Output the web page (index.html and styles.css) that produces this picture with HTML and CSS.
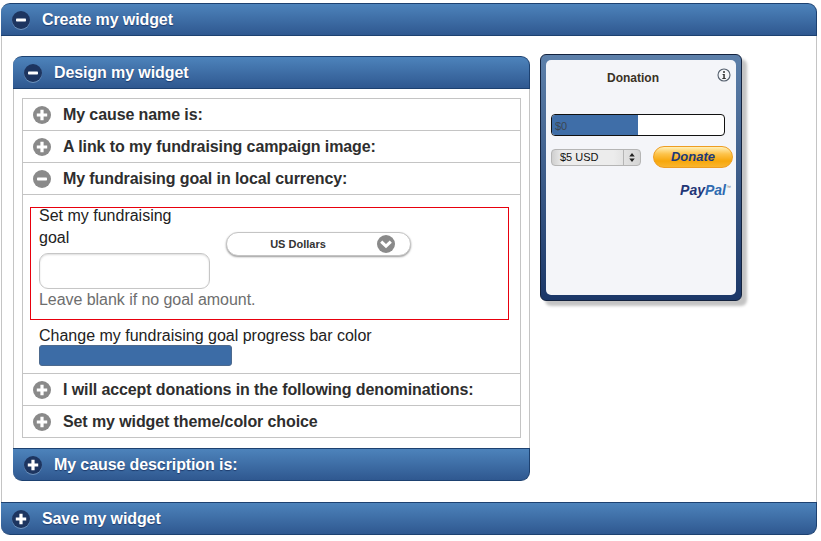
FILE: index.html
```html
<!DOCTYPE html>
<html lang="en">
<head>
  <meta charset="UTF-8">
  <title>Create my widget</title>
  <link rel="stylesheet" href="styles.css">
</head>
<body>

  <svg class="defs" width="0" height="0">
    <symbol id="minus" viewBox="0 0 18 18">
      <rect x="4" y="7.4" width="10" height="3.2" rx="0.8" fill="currentColor"/>
    </symbol>
    <symbol id="plus" viewBox="0 0 18 18">
      <path d="M7.4 3.8h3.2v3.6h3.6v3.2h-3.6v3.6H7.4v-3.6H3.8V7.4h3.6z" fill="currentColor"/>
    </symbol>
  </svg>

  <div class="page">
    <div class="bar bar-top">
      <span class="round"><svg><use href="#minus"/></svg></span>
      Create my widget
    </div>

    <div class="panel">
      <div class="design">
        <div class="bar bar-small bar-top">
          <span class="round"><svg><use href="#minus"/></svg></span>
          Design my widget
        </div>

        <div class="design-body">
          <div class="list">
            <div class="row">
              <span class="round grey"><svg><use href="#plus"/></svg></span>
              My cause name is:
            </div>
            <div class="row">
              <span class="round grey"><svg><use href="#plus"/></svg></span>
              A link to my fundraising campaign image:
            </div>
            <div class="row">
              <span class="round grey"><svg><use href="#minus"/></svg></span>
              My fundraising goal in local currency:
            </div>

            <div class="goal">
              <div class="goal-box">
                <div class="goal-left">
                  <label class="goal-label">Set my fundraising goal</label>
                  <input class="goal-input" type="text">
                  <div class="goal-hint">Leave blank if no goal amount.</div>
                </div>
                <div class="currency">
                  <span class="currency-name">US Dollars</span>
                  <span class="chevron">
                    <svg viewBox="0 0 18 18"><path d="M4.2 6.6l4.8 4.6 4.8-4.6" fill="none" stroke="#fff" stroke-width="3"/></svg>
                  </span>
                </div>
              </div>
              <div class="color-label">Change my fundraising goal progress bar color</div>
              <div class="color-swatch"></div>
            </div>

            <div class="row row-line">
              <span class="round grey"><svg><use href="#plus"/></svg></span>
              I will accept donations in the following denominations:
            </div>
            <div class="row">
              <span class="round grey"><svg><use href="#plus"/></svg></span>
              Set my widget theme/color choice
            </div>
          </div>
        </div>

        <div class="bar bar-small bar-bottom">
          <span class="round"><svg><use href="#plus"/></svg></span>
          My cause description is:
        </div>
      </div>

      <div class="widget">
        <div class="widget-inner">
          <div class="widget-head">
            <span class="widget-title">Donation</span>
            <svg class="info" viewBox="0 0 14 14">
              <circle cx="7" cy="7" r="6" fill="none" stroke="#55606e" stroke-width="1.1"/>
              <circle cx="7" cy="4" r="1" fill="#333"/>
              <path d="M5.6 6h2.2v4h1v1H5.3v-1h1V7H5.6z" fill="#333"/>
            </svg>
          </div>
          <div class="progress">
            <div class="progress-fill" style="width: 50%">$0</div>
          </div>
          <div class="donate-row">
            <div class="amount">
              <span class="amount-text">$5 USD</span>
              <span class="amount-arrows">
                <svg viewBox="0 0 8 12"><path d="M4 1l3 4H1zM4 11L1 7h6z" fill="#222"/></svg>
              </span>
            </div>
            <div class="donate">Donate</div>
          </div>
          <div class="paypal">Pay<span class="pal">Pal</span><sup class="tm">™</sup></div>
        </div>
      </div>
    </div>

    <div class="bar bar-bottom">
      <span class="round"><svg><use href="#plus"/></svg></span>
      Save my widget
    </div>
  </div>

</body>
</html>
```

FILE: styles.css
```css
body {
  margin: 0;
  background: #fff;
  font-family: "Liberation Sans", Arial, sans-serif;
  color: #222;
}
.defs {
  display: block;
  height: 0;
}
.page {
  width: 816px;
  margin-left: 1px;
  padding-top: 3px;
}
.bar {
  display: flex;
  align-items: center;
  gap: 12px;
  height: 33px;
  box-sizing: border-box;
  padding-left: 11px;
  color: #fff;
  font-size: 16px;
  font-weight: bold;
  letter-spacing: -0.1px;
  text-shadow: 0 1px 1px #1d3a6b;
  background: linear-gradient(#4d83bb, #2f5890);
  border: 1px solid #1d4170;
  border-width: 1px 1px 1px 0;
}
.bar-top {
  border-radius: 9px 9px 0 0;
}
.bar-bottom {
  border-radius: 0 0 9px 9px;
}
.round {
  width: 18px;
  height: 18px;
  border-radius: 50%;
  background: #1d3560;
  color: #fff;
  box-shadow: 0 1px 0 #6f93bd;
  flex-shrink: 0;
}
.round svg {
  display: block;
  width: 18px;
  height: 18px;
}
.round.grey {
  background: #8a8a8a;
  box-shadow: none;
}
.panel {
  display: flex;
  align-items: flex-start;
  gap: 10px;
  padding: 20px 0 21px 11px;
  border: 1px solid #c4c4c4;
  border-width: 0 1px;
}
.design {
  width: 517px;
}
.design-body {
  padding: 9px 8px 10px 8px;
  border: 1px solid #c4c4c4;
  border-width: 0 1px;
}
.list {
  border: 1px solid #c4c4c4;
}
.row {
  display: flex;
  align-items: center;
  gap: 12px;
  height: 32px;
  box-sizing: border-box;
  padding-left: 10px;
  font-size: 16px;
  font-weight: bold;
  letter-spacing: -0.1px;
  color: #2e2e2e;
  border-bottom: 1px solid #c4c4c4;
}
.row:last-child {
  border-bottom: 0;
  height: 31px;
}
.goal {
  padding: 12px 11px 7px 7px;
  border-bottom: 1px solid #c4c4c4;
}
.goal-box {
  display: flex;
  align-items: flex-start;
  gap: 16px;
  height: 113px;
  box-sizing: border-box;
  padding: 0 0 0 8px;
  border: 1px solid #e8000d;
}
.goal-left {
  width: 171px;
}
.goal-label {
  display: block;
  width: 150px;
  margin-top: -3px;
  font-size: 16px;
  line-height: 22px;
  color: #222;
}
.goal-input {
  display: block;
  width: 171px;
  height: 36px;
  box-sizing: border-box;
  margin-top: 4px;
  background: #fff;
  border: 1px solid #c6c6c6;
  border-radius: 9px;
  box-shadow: inset 0 1px 2px #ddd;
}
.goal-hint {
  font-size: 16px;
  line-height: 22px;
  letter-spacing: -0.05px;
  color: #6e6e6e;
  white-space: nowrap;
}
.currency {
  display: flex;
  align-items: center;
  width: 185px;
  height: 24px;
  box-sizing: border-box;
  margin-top: 24px;
  padding: 0 15px 0 0;
  background: #fff;
  border: 1px solid #c4c4c4;
  border-radius: 12px;
  box-shadow: 0 1px 2px #999;
}
.currency-name {
  flex: 1;
  padding-right: 8px;
  text-align: center;
  font-size: 11px;
  font-weight: bold;
  color: #333;
}
.chevron {
  width: 18px;
  height: 18px;
  border-radius: 50%;
  background: #8a8a8a;
}
.chevron svg {
  display: block;
  width: 18px;
  height: 18px;
}
.color-label {
  margin-top: 7px;
  padding-left: 9px;
  font-size: 16px;
  line-height: 18px;
  color: #222;
}
.color-swatch {
  width: 193px;
  height: 21px;
  box-sizing: border-box;
  margin-left: 9px;
  background: #3c6ca6;
  border: 1px solid #4d6a8e;
  border-radius: 3px;
}
.widget {
  width: 202px;
  height: 247px;
  box-sizing: border-box;
  margin-top: -2px;
  padding: 5px;
  background: linear-gradient(#5d80aa, #1b3768);
  border: 1px solid #14233e;
  border-radius: 6px;
  box-shadow: 5px 5px 3px #c4c4c4;
}
.widget-inner {
  height: 100%;
  box-sizing: border-box;
  padding: 0 5px 0 5px;
  background: #f4f5f9;
  border-radius: 5px;
}
.widget-head {
  position: relative;
  height: 54px;
  padding: 8px 16px 0 0;
  box-sizing: border-box;
  text-align: center;
}
.widget-title {
  font-size: 12px;
  font-weight: bold;
  color: #3a3226;
}
.info {
  position: absolute;
  right: 0;
  top: 8px;
  width: 14px;
  height: 14px;
}
.progress {
  width: 174px;
  height: 22px;
  box-sizing: border-box;
  background: #fff;
  border: 1px solid #111;
  border-radius: 4px;
  overflow: hidden;
}
.progress-fill {
  height: 100%;
  padding-left: 3px;
  box-sizing: border-box;
  background: #3f6ea8;
  font-size: 11px;
  line-height: 22px;
  color: #3c4652;
}
.donate-row {
  display: flex;
  align-items: center;
  justify-content: space-between;
  width: 182px;
  margin-top: 10px;
}
.amount {
  display: flex;
  width: 90px;
  height: 17px;
  box-sizing: border-box;
  background: linear-gradient(90deg, #cfcfcf, #ececec 12%, #ececec 70%, #d4d4d4);
  border: 1px solid #b5b5b5;
  border-radius: 4px;
  font-size: 11px;
  line-height: 15px;
  color: #111;
}
.amount-text {
  flex: 1;
  padding-left: 8px;
}
.amount-arrows {
  width: 16px;
  border-left: 1px solid #b5b5b5;
}
.amount-arrows svg {
  display: block;
  width: 8px;
  height: 11px;
  margin: 2px 4px;
}
.donate {
  width: 80px;
  height: 22px;
  box-sizing: border-box;
  text-align: center;
  font-size: 13px;
  font-weight: bold;
  font-style: italic;
  line-height: 20px;
  color: #1d3a78;
  background: linear-gradient(#fff0b8 0, #fdc34a 35%, #f7a70c 70%, #f9b52e 100%);
  border: 1px solid #ee9d22;
  border-radius: 11px;
}
.paypal {
  width: 180px;
  margin-top: 15px;
  text-align: right;
  font-size: 14px;
  font-weight: bold;
  font-style: italic;
  line-height: 15px;
  color: #1f3676;
}
.pal {
  color: #2e6ab0;
}
.tm {
  font-size: 5px;
  font-style: normal;
  font-weight: normal;
  vertical-align: top;
  line-height: 8px;
  color: #777;
}
```
